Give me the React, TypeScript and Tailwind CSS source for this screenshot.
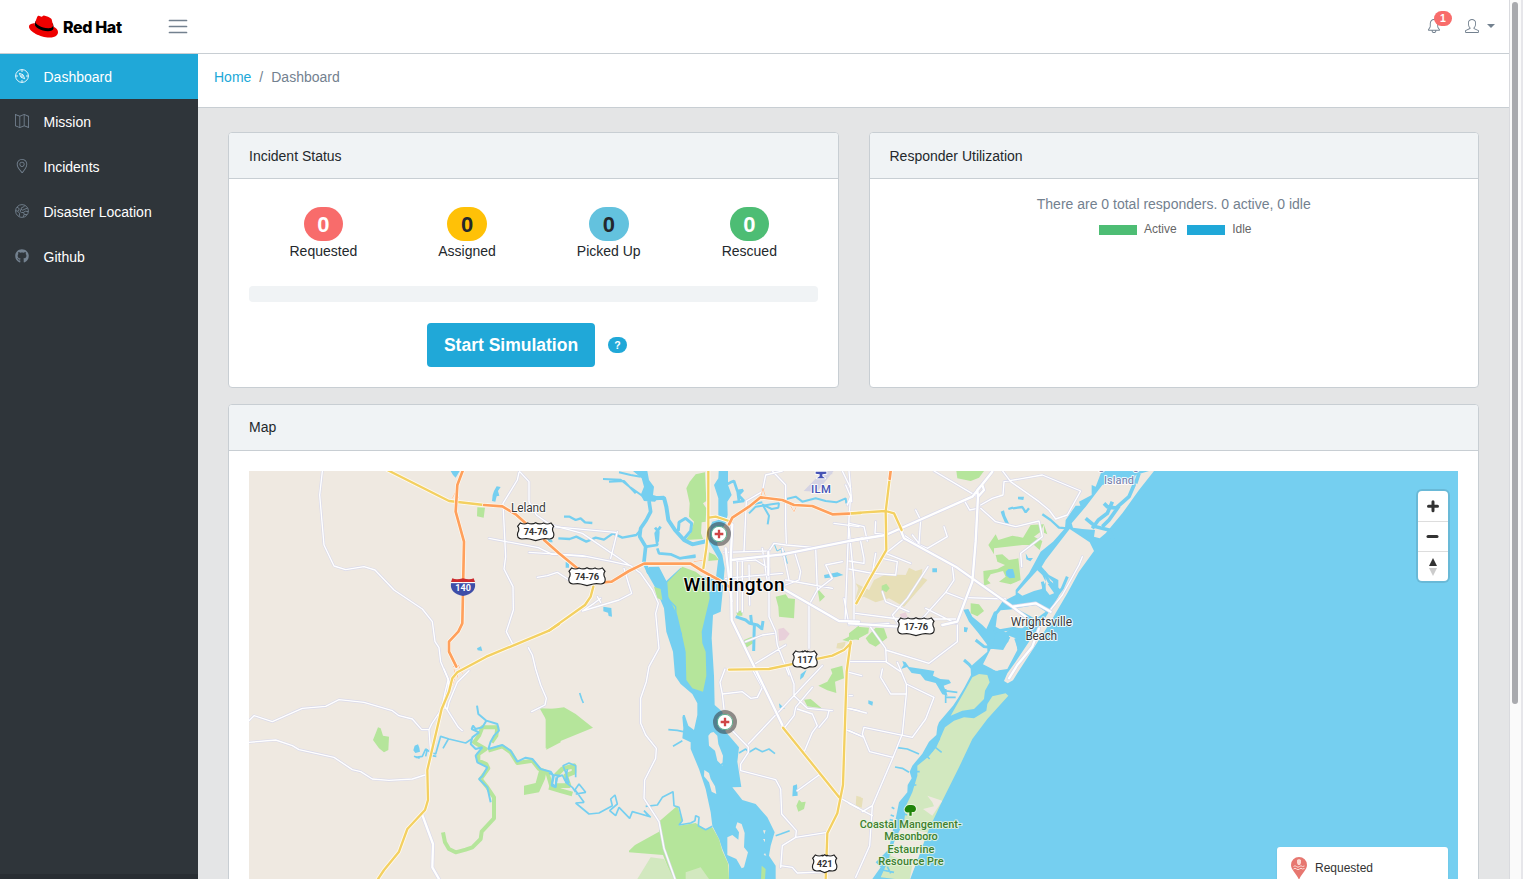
import React from "react";
import { SlMap, SlLocationPin, SlBell, SlUser } from "react-icons/sl";
import { FaGithub } from "react-icons/fa";

type Shape = [number, number, string];

const LAND = "#efe9e1";
const WATER = "#75cff0";
const GREEN = "#b5e59b";
const RESERVE = "#d2e8bf";

// Map geometry is grouped by tile: [tile x, tile y, path].
const seas: Shape[] = [
  [1800, 0, "M765 0L740 65 728 60 728 90 690 110 694 122 680 122 650 165 648 190 612 230 575 260 540 325 500 375 500 390 460 410 440 440 438 480 415 500 415 560 370 600 365 612 366 630 345 670 327 700 312 722 270 772 265 785 262 810 240 830 220 866 190 902 182 920 188 940 176 960 175 982 150 1012 140 1062 130 1102 120 1152 100 1172 80 1192 95 1207 70 1242 1900 1250 1900 0Z"],
  [900, 0, "M510 0H537V60L548 90 535 110 536 150 530 175 505 210 505 240 520 270 527 310 520 390 515 440 492 450 488 520 495 632 497 720 520 740 530 800 570 847 565 890 577 966 550 967 580 1005 620 1017 655 1057 677 1102 665 1142 660 1172 680 1202 680 1250H540L540 1200 520 1152 510 1122 490 1082 485 1042 470 972 450 912 425 852 425 832 400 820 403 790 400 755 407 750 418 782 435 795 445 750 445 715 430 687 395 657 378 632 372 560 352 500 345 430 320 370 292 320 300 306 330 305 352 348 395 308 400 320 500 345 508 280 482 235 470 215 490 170 508 165 508 100 495 60 508 40Z"],
  [900, 0, "M252 18L295 18 300 45 315 65 312 90 330 95 318 110 285 108 275 90 285 65 278 40Z"],
  [1800, 0, "M343 434L358 432 370 455 400 480 412 492 435 440 465 430 440 500 430 560 400 520 385 500 360 470Z"],
  [0, 0, "M605 18h27l-12 20-8-8z M735 78l8-14 12 2-8 12 4 14-8 2-4 16-10-2 2-18z M684 550l12-6 4 14-14-2z M497 842l10-4 4 10 2 12-14 4-6-8z M895 222l14 2 2 8-12 0z"],
  [900, 0, "M163 425l24 4 2 26-10-2-2-10-14-4z M825 330l40-8 18 8-22 6-34 4z M697 245l10 14 10 38-10-6-10-26z M732 962l12-4 2 34-16 2z M355 1102l12 0 4 12-10 28-8-2z M690 715l18 16-16-2z M50 290l10 4 0 14-10 0z M755 628l18-14-10 22-10 8z M485 1215l25-24 6 8-10 30-20 20-8-10z"],
  [1800, 0, "M455 140l10-4 4 16 12 26-10 2-12-28z M507 95l18 0-2 10-16-2z M530 265l8 14 14 0-8 10-12-6z M250 310h14v12h-14z M345 486l12 2-4 14-8-2z M58 706l14 4-2 12-12-6z M160 588l10 4 10 14 40 6 36 6-4 14 22 10 26 2 6 10-22 8 12 30-16-4-20-34-32-8-14-18-26-4-14-18-18 6 8-12z"],
];

const creeks: [number, number, string, number][] = [
  [900, 0, "M318 100L345 98 352 125 358 165 378 195 405 225 430 238 475 228", 12],
  [900, 0, "M388 198L390 172 410 160 428 175 425 198 405 222", 9],
  [900, 0, "M300 108L305 140 292 165 275 190 272 215 290 245 285 290 300 325", 11],
  [900, 0, "M210 22L245 30 275 35M162 42L215 44 245 68 285 96M180 50L225 48 260 85", 6],
  [900, 0, "M45 155L62 155 80 165 95 160 108 172 130 174M28 220L62 222 82 215 112 230 140 218 165 224 192 205 220 218 262 210 275 195", 7],
  [900, 0, "M292 245L325 240 320 205 335 185M325 250L330 265 365 268 392 280 440 272M318 188L328 200 326 230M408 278L440 275", 8],
  [900, 0, "M360 405L380 425 382 470 398 510", 4],
  [900, 0, "M530 60L545 52 555 48 565 78 582 75 568 90 585 108 552 112M566 80L570 110", 8],
  [900, 0, "M600 145L620 125 640 122 668 118 690 115 688 128 668 132 640 118 660 152 656 178M712 102L740 95 760 110 800 100 830 108 862 112 890 100 892 115M600 128L612 118 640 112", 6],
  [900, 0, "M560 455L590 465 602 475 625 480 640 492M605 450L608 478M616 482L615 515 614 558M638 495L642 468", 9],
  [900, 0, "M677 240L684 258 700 250 712 272", 3],
  [0, 612, "M684 110L688 135 712 155 745 165 750 185 735 200 725 218 718 240 760 228 785 245 805 278 830 266 850 270 875 300 905 308 912 318 935 320", 6],
  [0, 612, "M712 155L700 175 680 180 672 170 668 180 690 190 670 205 665 225 680 240 700 235 680 260 685 280 715 295 700 322 690 330 715 355 725 400", 6],
  [0, 612, "M668 210L650 222 600 210 575 202 560 255 545 250 530 240 520 262 500 265M598 210L582 238M548 260L562 262M495 262L512 268M530 262L535 240", 5],
  [0, 612, "M912 318L908 350 920 355 922 325", 6],
  [900, 612, "M0 312L15 320 10 345 20 352 25 325 40 318 48 335 60 342 50 310 42 290 60 282 80 290 80 325M55 300L50 340 70 355 80 370M80 375L110 370 90 345 78 362 105 400 80 402 120 435 150 432 190 410 185 390 198 378 205 405 182 425 200 440 210 415 242 448 250 428 275 435 300 442 285 425 305 445M290 412L325 408 340 385 372 368 375 410 390 415 400 455 390 468 425 462 438 455 440 440 450 445 448 470 470 482 490 472", 5],
  [900, 612, "M358 182L385 184 402 188M372 232L400 215M404 138L406 170M92 72L98 90 103 102M570 252L590 240 600 250 620 238 640 248 660 240 678 254M680 500L695 495 722 485M478 190L500 185M510 290L525 282M540 430L548 438", 5],
  [1800, 0, "M492 130L520 126 530 142 540 130M478 132L492 128M580 148L605 165 630 188 655 190", 7],
  [1800, 612, "M285 65L325 70M288 85L320 85M290 60L290 102M145 236L175 240 210 255M138 294L160 298 180 310M128 415l8 4M125 438l10 4M122 452l10 2", 5],
];

const islands: Shape[] = [
  [1800, 0, "M795 48L850 55 860 30 900 18 915 18 870 75 820 145 770 205 752 220 735 215 738 195 700 192 672 188 668 175 710 125 760 60Z"],
  [1800, 0, "M662 192L722 232 735 258 690 320 655 385 605 470 560 540 505 625 492 646 476 655 465 648 475 625 500 590 560 500 575 480 600 440 628 395 628 345 600 330 578 305 590 285Z"],
  [1800, 0, "M565 316L580 330 590 350 578 372 555 378 520 392 505 382Z M590 330L612 350 615 385 602 390 590 375Z"],
  [1800, 0, "M445 448L455 436 500 432 520 455 545 470 520 490 490 488 470 502 440 485Z M480 512L500 520 505 555 475 612 440 617 402 598 425 552 455 548 478 530Z"],
  [1800, 0, "M500 430L560 420 590 440 560 462 520 440Z"],
  [900, 612, "M490 185L478 200 480 230 498 245 505 275 520 290 522 260 508 225 505 200Z M466 303L465 322 480 340 488 368 502 375 498 352 485 330 480 312Z M565 460L578 465 587 492 585 535 597 550 585 595 578 598 562 570 535 558 535 505 550 498 568 512 570 490 560 475Z M642 484h8l-4 12z M642 510h6v10z M648 552l4 8-8-2z"],
  [1800, 612, "M430 0h25l-10 5z"],
];

const woods: Shape[] = [
  [0, 0, "M685 127L708 128 704 158 684 154Z M387 787L395 790 402 812 420 815 418 855 405 862 390 850 372 825 380 805Z"],
  [0, 612, "M872 118L930 120 935 220 892 242 893 155Z M825 350L860 342 870 305 892 310 888 330 870 370 825 378Z"],
  [900, 612, "M-10 122L45 115 80 135 132 176 20 222 -10 238Z M240 545L258 528 330 488 332 456 385 410 400 455 390 470 440 462 470 482 490 475 510 510 520 545 538 585 540 630 480 645 370 630 342 558 240 550Z M765 92L785 90 818 118 775 112Z M750 392L758 400 770 398 765 420 748 428 742 410Z M638 590L650 600 648 630 636 630Z"],
  [900, 0, "M440 28L468 22 472 108 462 115 472 130 470 170 458 172 456 205 462 222 410 225 425 205 435 170 420 155 422 115 412 70 422 50Z"],
  [900, 0, "M480 262L498 270 510 285 478 288Z M315 365L335 372 340 405 325 400Z"],
  [900, 0, "M355 352L400 305 440 320 478 350 482 400 470 450 458 500 460 535 470 560 472 632 462 680 430 670 412 645 410 560 398 505 385 450 358 395Z"],
  [900, 0, "M680 395L710 388 718 400 738 402 735 460 690 455 688 425Z M805 370L828 395 812 410Z M585 525L608 515 612 535 592 548Z M562 440L580 436 580 452 565 452Z M845 612L880 602 885 640 858 650 862 684 835 676 808 662 835 650 850 625Z M895 520L930 480 930 525Z"],
  [1800, 0, "M322 18H405L390 38 365 48 325 40Z"],
  [1800, 0, "M440 270L460 268 480 285 508 280 515 345 485 358 450 350 470 335 462 318 425 328 415 345 425 355 405 362 403 318 445 312 468 300 445 290Z"],
  [1800, 0, "M440 208L448 225 490 212 522 218 545 180 585 178 575 200 555 215 580 228 572 255 555 240 520 240 435 250 435 268 418 240Z M585 180l10 28-10-5z"],
  [1800, 0, "M365 415L390 418 405 438 385 454 365 445Z M0 505L25 485 60 488 58 505 30 520 0 528Z M50 520L80 488 105 490 115 518 80 545 60 535Z M-20 525L0 515 0 530Z"],
];

const reserves: Shape[] = [
  [1800, 612, "M305 140L345 70 370 25 390 15 415 18 422 40 408 65 405 90 375 120 340 125Z"],
  [1800, 612, "M478 80L470 73 430 82 415 105 412 125 375 148 345 145 315 155 288 175 262 235 240 262 205 290 205 320 190 370 172 408 165 460 150 500 125 540 120 570 95 625 180 635 210 560 240 480 280 395 330 295 370 210 415 150Z"],
  [900, 612, "M305 565L345 570 375 630 265 630Z M410 610L455 595 480 630 410 630Z"],
];

const sands: Shape[] = [
  [1800, 612, "M235 380L280 395 250 440 222 420 255 412 250 400Z M155 478L235 490 210 560 180 640 190 590 165 575 125 560 135 520Z"],
];

const fields: Shape[] = [
  [1800, 0, "M75 345L110 328 170 330 180 308 200 318 220 312 218 335 235 345 165 425 120 400 80 412 45 395 18 405 28 370 20 355 60 375Z M22 992l20 8-4 28-18-4z"],
  [900, 0, "M865 535L890 530 885 552 862 550Z M925 995h10v22h-10z"],
];

const greenWays: [string, number, string][] = [
  ["translate(0 612)", 12, "M582 490L588 520 600 540 620 550 650 542 670 535 695 510 698 488 735 448 735 385 715 355 695 330 718 298 712 285 688 275 688 255 710 240 675 220 690 200 700 175 745 175 742 200 728 220M718 245L760 232 785 250 805 282 850 275 870 300 895 310 908 355 935 365"],
  ["translate(900 612)", 14, "M0 355L35 365 70 375M20 320L40 300 75 290 75 310 50 320 60 350 20 350"],
];

const minor: Shape[] = [
  [0, 0, "M221 10L212 90 225 240 255 303 290 314 345 305 378 315 435 375 520 432 550 470 558 530 570 548 575 590 600 650 588 730 M810 22L805 45 762 115 770 275 765 312 792 365 793 435 772 500 790 535 M812 20L840 50 840 110 862 150 912 185 1100 202 M720 220L868 248 910 268 930 268 1010 275 M865 337L895 332 925 322 960 345 M838 548L850 570 860 612 875 660 892 700 888 720 848 740"],
  [0, 612, "M0 155L15 140 70 158 160 118 230 112 270 92 345 100 430 125 450 140 490 150 518 182 540 182 548 165 578 120 588 70 598 30 585 0 M540 182L545 250 M590 115L628 175 640 185 M0 220L80 213 130 230 150 242 255 265 310 302 335 308 370 330 420 334 490 330 528 318 M660 5L625 40 600 100 595 120"],
  [900, 0, "M0 178L100 205 240 300 M-60 262L100 272 190 290 245 302 275 325 310 375 328 415 320 445 330 550 300 605 292 650 275 700 275 775 290 810 322 850 320 880 287 945 285 1000 330 1070 345 1150 378 1242 M205 200L185 280 M225 310L240 360 248 385 210 405 100 438 135 415 155 400 M145 395L155 412"],
  [900, 0, "M700 18L650 30 640 80 592 108 585 260 M670 18L710 60 710 180 712 235 M890 60L905 95 895 120 M880 18L905 70 M905 90L900 160 888 470 M855 175L930 185 M525 262L660 258 675 235 710 240 800 248 M562 288L620 285 660 310 660 455 680 500 685 540 720 630 M530 340L700 325 M800 250L805 375 780 420 780 550 M738 265L755 320 750 345 710 360 M580 290L580 440 M600 300L602 420 M565 290L565 440 M640 250L655 350 M700 250L720 345 M710 345L850 370 M805 375L850 340 830 300 880 290 M885 400L900 480 M590 530L640 510 675 505 M620 595L710 540"],
  [900, 612, "M528 0L513 40 520 75 525 120 M520 75L580 68 605 88 625 85 640 55 M640 55L610 0 M550 185L598 235 598 250 575 285 575 305 680 332 695 360 698 435 742 485 740 505 M598 225L820 -10 M695 595L700 530 740 505 835 490 M695 590L730 595 745 612 840 608 M705 178L735 140 740 115 790 55 M745 120L790 135 805 170 790 190 765 250 M840 125L835 145 810 175 M850 125L775 118 735 80 735 45 715 -10 M870 385L930 418 M890 182L930 198 M895 118L930 125 M745 365L810 318"],
  [1800, 0, "M0 175L45 185 55 228 M80 170L78 205 108 208 M0 190L15 345 15 470 M0 288L45 295 45 280 35 230 M110 265L185 295 M80 265L70 325 0 312 M70 325L140 330 145 290 100 280 M110 265L160 225 M200 135L215 165 210 235 190 210 M165 210L200 235 235 250 295 215 285 185 M0 18L8 110"],
  [1800, 0, "M255 18L385 95 M465 50L580 30 695 78 655 150 620 162 600 135 570 110 485 50 455 10 M465 50L462 90 430 100 395 120 M395 130L440 170 500 185 570 168 580 215 515 265 518 305 M345 105L362 135 385 130 M310 305L315 345 290 382 220 460 M290 382L350 405 M237 305L175 400 130 450 150 480 M355 398L470 402 M20 480L120 475 M20 445L150 462 320 462 M60 480L110 550 112 590 M110 555L240 595 325 530 325 480 M230 430L320 475 M100 380L110 410 180 440 M0 590L110 590 155 620"],
  [1800, 612, "M100 0L95 25 125 75 172 75 172 45 145 -20 M172 45L255 85 230 150 190 205 45 175 40 195 62 248 132 265 M172 75L160 195 M45 205L0 185 M160 195L132 265 70 410 62 530 20 625 M0 403L70 440 M70 410L40 428 M0 80H10 M0 118L52 132 M0 10L38 20"],
  [1800, 0, "M700 275L690 300 640 390 600 440"],
];

const major: Shape[] = [
  [900, 0, "M550 178L545 285 548 465 700 780 M530 250L548 410 M548 285L700 268 940 220 M658 260L658 330 M700 370L870 468 930 470"],
  [1800, 0, "M0 228L110 210 370 95 430 20 M400 60L405 75 387 95 380 230 370 350 325 470 280 480 M387 95L385 75 400 58 M155 195L165 220 320 305 490 425 530 455 M490 425L560 415 605 440 M0 475L150 485 M570 490L550 545 505 600 480 640"],
  [0, 612, "M520 438L552 525 550 595 570 630"],
];

const yellow: Shape[] = [
  [0, 0, "M415 15L600 108 705 120 M930 477L900 497 712 575 625 622 610 640 600 680 578 732 535 915 537 1005 528 1035 475 1092 450 1160 405 1215 385 1245"],
  [900, 0, "M478 15L478 190 472 250 463 310 M480 158L500 155 540 168 M133 365L125 395 108 420 0 497 M900 146L935 144 M540 614L660 612 740 595 850 572 885 555 905 535"],
  [900, 0, "M905 530L893 620 882 960 865 1045 835 1105 830 1245 M702 788L870 996"],
  [1800, 0, "M0 145L110 138 135 145 158 195 M122 40L110 140 112 255 60 345 22 415"],
];

const orange: Shape[] = [
  [0, 0, "M642 15L625 60 620 140 645 230 640 475 628 500 600 530 600 560 622 605 M705 120L760 124 800 148 830 175 M885 225L930 265 985 310"],
  [900, 0, "M160 352L188 350 240 318 285 296 425 296 460 318 510 345 540 365 M540 178L550 158 600 125 635 97 700 105 735 120 790 123 850 148 900 146"],
  [1800, 0, "M126 10L122 42"],
];

const ramps: Shape[] = [
  [0, 0, "M610 100L620 80 630 100 M612 605L628 600 640 625"],
  [0, 612, "M615 0L620 20 610 50 M628 0L625 25"],
  [900, 0, "M635 97L642 70 650 97 665 98 M435 290L465 285 460 310 M720 115L735 140 745 118"],
];

function Layer({ shapes, fill }: { shapes: Shape[]; fill: string }) {
  return (
    <g fill={fill}>
      {shapes.map(([x, y, d], i) => (
        <path key={i} transform={`translate(${x} ${y})`} d={d} />
      ))}
    </g>
  );
}

function Roads({ shapes, casing, color, outer, inner }: { shapes: Shape[]; casing: string; color: string; outer: number; inner: number }) {
  const draw = (stroke: string, width: number) => (
    <g fill="none" stroke={stroke} strokeWidth={width} strokeLinejoin="round" strokeLinecap="round">
      {shapes.map(([x, y, d], i) => (
        <path key={i} transform={`translate(${x} ${y})`} d={d} />
      ))}
    </g>
  );
  return (
    <>
      {draw(casing, outer)}
      {draw(color, inner)}
    </>
  );
}

function UsShield({ x, y, label, w, text }: { x: number; y: number; label: string; w: number; text: number }) {
  const h = w / 2;
  return (
    <g transform={`translate(${x} ${y})`}>
      <path
        d={`M${-h + 10} -26Q${-h + 22} -20 ${-h + 32} -26Q-10 -20 0 -27Q10 -20 ${h - 32} -26Q${h - 22} -20 ${h - 10} -26L${h - 2} -16Q${h - 9} -8 ${h - 2} 4Q${h + 2} 20 ${h - 14} 22Q${h - 30} 20 ${h / 3} 22L0 27L${-h / 3} 22Q${-h + 30} 20 ${-h + 14} 22Q${-h - 2} 20 ${-h + 2} 4Q${-h + 9} -8 ${-h + 2} -16Z`}
        fill="#fff"
        stroke="#222"
        strokeWidth="3.5"
      />
      <text y="10" textAnchor="middle" fontSize="28" fontWeight="700" fill="#333" textLength={text}>
        {label}
      </text>
    </g>
  );
}

function Hospital({ x, y }: { x: number; y: number }) {
  return (
    <g transform={`translate(${x} ${y})`}>
      <circle r="30" fill="none" stroke="#333" strokeOpacity=".52" strokeWidth="12" />
      <circle r="23" fill="#fff" stroke="#3b9b74" strokeWidth="2.5" />
      <path d="M-13 0H13M0 -13V13" stroke="#cf4647" strokeWidth="7" />
    </g>
  );
}

function RegionMap() {
  return (
    <svg className="block h-full w-full" viewBox="0 18 3627 1224" preserveAspectRatio="none" fontFamily='Roboto, "Liberation Sans", sans-serif'>
      <rect width="3627" height="1250" fill={LAND} />
      <Layer shapes={fields} fill="#e7dfb8" />
      <path d="M1588 492l16-4 18 18-14 18-18 4zM1952 448l18-6 6 14-16 8z" fill="#e8d0da" />
      <path d="M1664 78l50-52 40-8-50 62zM1714 18h36v10h-30z" fill="#d5d3e3" />
      <Layer shapes={seas} fill={WATER} />
      <Layer shapes={islands} fill={LAND} />
      <Layer shapes={woods} fill={GREEN} />
      <Layer shapes={reserves} fill={RESERVE} />
      <Layer shapes={sands} fill={LAND} />
      {greenWays.map(([t, w, d], i) => (
        <path key={i} transform={t} d={d} fill="none" stroke={GREEN} strokeWidth={w} strokeLinejoin="round" />
      ))}
      <g fill="none" stroke={WATER}>
        {creeks.map(([x, y, d, w], i) => (
          <path key={i} transform={`translate(${x} ${y})`} d={d} strokeWidth={w} strokeLinejoin="bevel" />
        ))}
        <path d="M2510 160L2540 185 2580 195 2595 230M2530 190L2548 165 2575 145 2590 110M2565 115L2575 125 2605 130 2580 165 2560 185M2600 130L2640 95 2655 60 2650 40M2670 25L2660 55" strokeWidth="11" />
        <path d="M2370 545L2400 530 2415 560M2235 500L2295 490 2330 500 2348 505M2180 525L2205 545 2260 550 2280 515M2300 520L2312 555M2385 320L2400 350 2435 380M2400 355L2425 390 2440 370 2455 335M2380 350L2390 395 2410 410M2145 585L2160 598 2178 620" strokeWidth="9" />
        <path d="M2048 860L2072 820M2060 848L2078 862M1960 1045L1974 1050M1900 1215L1935 1222M1915 1205L1925 1225M2030 870L2042 882M1995 920H2012M1985 960H2002" strokeWidth="5" />
      </g>
      <path transform="translate(1800 0)" d="M470 320l8-8 14 0 4 14 2 12-16 2-10-8z" fill={WATER} />
      <path d="M1898 362l14-6 10 14-10 12-14-8z" fill={GREEN} />
      <Roads shapes={minor} casing="#dadaeb" color="#ffffff" outer={8} inner={4} />
      <Roads shapes={major} casing="#dadaeb" color="#ffffff" outer={11} inner={7} />
      <Roads shapes={ramps} casing="#fff" color="#ffa869" outer={4} inner={2} />
      <Roads shapes={yellow} casing="#fffaf0" color="#f3d061" outer={12} inner={7} />
      <Roads shapes={orange} casing="#fffaf0" color="#ffa05c" outer={12} inner={8} />

      <UsShield x={860} y={200} label="74-76" w={112} text={72} />
      <UsShield x={1014} y={335} label="74-76" w={112} text={72} />
      <UsShield x={2001} y={485} label="17-76" w={112} text={72} />
      <UsShield x={1668} y={584} label="117" w={76} text={47} />
      <UsShield x={1727} y={1196} label="421" w={76} text={47} />

      <g transform="translate(642 366)">
        <path d="M-32 -26Q-20 -20 0 -26Q20 -20 32 -26L36 -15H-36Z" fill="#cb2b2e" />
        <path d="M-36 -12H36Q40 20 0 27Q-40 20 -36 -12Z" fill="#3e4ea8" />
        <path d="M-36 -13H36" stroke="#fff" strokeWidth="3" />
        <text y="12" textAnchor="middle" fontSize="27" fontWeight="700" fill="#fff" textLength="47">140</text>
      </g>

      <Hospital x={1410} y={207} />
      <Hospital x={1428} y={771} />

      <g stroke="#fff" strokeOpacity=".85" strokeWidth="6" strokeLinejoin="round" paintOrder="stroke" textAnchor="middle">
        <text x="1455" y="378" fontSize="57" fontWeight="500" fill="#000" textLength="303">Wilmington</text>
        <text x="838" y="142" fontSize="36" fill="#3b3b3b" textLength="104">Leland</text>
        <text x="2377" y="482" fontSize="36" fill="#3b3b3b" textLength="184">Wrightsville</text>
        <text x="2377" y="525" fontSize="36" fill="#3b3b3b" textLength="95">Beach</text>
        <text x="2610" y="58" fontSize="33" fill="#7178a8" textLength="90">Island</text>
        <text x="2610" y="16" fontSize="33" fill="#7178a8" textLength="180">Figure Eight</text>
        <text x="1716" y="83" fontSize="34" fontWeight="500" fill="#4653b5" textLength="60">ILM</text>
        <path d="M1700 20H1732V26L1720 28V34L1728 40H1704L1712 34V28L1700 26Z" fill="#4653b5" />
        <g fontSize="33" fontWeight="500" fill="#3d8030" stroke="#eaf5df">
          <text x="1985" y="1089" textLength="306">Coastal Mangement-</text>
          <text x="1986" y="1126" textLength="161">Masonboro</text>
          <text x="1986" y="1163" textLength="141">Estaurine</text>
          <text x="1986" y="1200" textLength="196">Resource Pre</text>
          <path d="M1981 1052V1042Q1966 1044 1967 1032Q1972 1018 1984 1020Q2000 1018 2001 1032Q2000 1043 1988 1041V1052Z" fill="#1f8409" />
        </g>
      </g>
    </svg>
  );
}

function RedHatLogo() {
  return (
    <div className="flex w-[94px] items-center">
      <svg className="h-[29px] w-[29px] shrink-0" viewBox="0 0 24 24">
        <path d="M5.3 7.6L4.6 9.9C4 14 10 17 16 17C20 17 21.5 15 20.6 13L19.8 9.6Z" fill="#000" />
        <path
          fill="#e00"
          d="M16.009 13.386c1.577 0 3.86-.326 3.86-2.202a1.765 1.765 0 0 0-.04-.431l-.94-4.08c-.216-.898-.406-1.305-1.982-2.093-1.223-.625-3.888-1.658-4.676-1.658-.733 0-.947.946-1.822.946-.842 0-1.467-.706-2.255-.706-.757 0-1.25.515-1.63 1.576 0 0-1.06 2.99-1.197 3.424a.81.81 0 0 0-.028.245c0 1.162 4.577 4.974 10.71 4.974m4.101-1.435c.218 1.032.218 1.14.218 1.277 0 1.765-1.984 2.745-4.593 2.745-5.895.004-11.06-3.451-11.06-5.734a2.326 2.326 0 0 1 .19-.925C2.746 9.415 0 9.794 0 12.217c0 3.969 9.405 8.861 16.851 8.861 5.71 0 7.149-2.582 7.149-4.62 0-1.605-1.387-3.425-3.887-4.512"
        />
      </svg>
      <div className="ml-[5px] flex gap-[3px] font-[Inter,sans-serif] text-[16px] leading-5 font-extrabold tracking-[-0.35px] text-black">
        <span>Red</span>
        <span>Hat</span>
      </div>
    </div>
  );
}

function Header() {
  return (
    <header className="flex h-[54px] shrink-0 items-center border-b border-[#c8ced3] bg-white text-[#73818f]">
      <div className="pl-[29px]">
        <RedHatLogo />
      </div>
      <svg className="ml-[45px] h-[17px] w-5" viewBox="0 0 20 17" stroke="#73818f" strokeWidth="1.7" strokeLinecap="round">
        <path d="M1.5 2.5H18.5M1.5 8.5H18.5M1.5 14.5H18.5" />
      </svg>
      <div className="relative mr-6 mb-[2px] ml-auto">
        <SlBell className="h-[14px] w-[14px]" />
        <span className="absolute -top-[8px] left-[7px] flex h-[15px] w-[18px] items-center justify-center rounded-full bg-[#f86c6b] text-[10.5px] leading-none font-bold text-white">
          1
        </span>
      </div>
      <div className="mr-[14px] mb-[2px] flex items-center gap-[8px]">
        <SlUser className="h-[14px] w-[14px]" />
        <span className="border-x-[4px] border-t-[4px] border-x-transparent border-t-[#73818f]" />
      </div>
    </header>
  );
}

function CompassIcon({ className }: { className: string }) {
  return (
    <svg className={className} viewBox="0 0 14 14" fill="none" stroke="currentColor" strokeWidth=".9">
      <circle cx="7" cy="7" r="6.4" />
      <path d="M7 .6V3M7 11V13.4M.6 7H3M11 7H13.4" />
      <path d="M4.3 4.3L8 5.7L9.7 9.7L6 8.2Z" />
      <circle cx="7" cy="7" r=".5" />
    </svg>
  );
}

function GlobeIcon({ className }: { className: string }) {
  return (
    <svg className={className} viewBox="0 0 14 14" fill="none" stroke="currentColor" strokeWidth=".9" strokeLinejoin="round">
      <circle cx="7" cy="7" r="6.4" />
      <path d="M2 3.2L4.2 4.6L3.8 6.4L2.4 7.2L.8 6.6M2.4 7.2L4.6 9.2L4.2 12.6M9.8 1.4L8.6 3L6.6 3.6L6 5.4L7.8 6.2L10 5L12.6 4.2M6 5.4L5 7.4L6.6 8.6L8.6 8.4L9.2 10.4L8.2 13M8.6 8.4L10.2 7.2L13.2 7.6M9.2 10.4L12 10.6" />
    </svg>
  );
}

const links = [
  { label: "Dashboard", Icon: CompassIcon },
  { label: "Mission", Icon: SlMap },
  { label: "Incidents", Icon: SlLocationPin },
  { label: "Disaster Location", Icon: GlobeIcon },
  { label: "Github", Icon: FaGithub },
];

function Sidebar() {
  return (
    <aside className="flex w-[198px] shrink-0 flex-col bg-[#2f353a]">
      <nav>
        {links.map(({ label, Icon }, i) => (
          <a
            key={label}
            className={
              i === 0
                ? "flex h-[45px] items-center bg-[#20a8d8] pl-[15px] text-white"
                : "flex h-[45px] items-center pl-[15px] text-white"
            }
          >
            <Icon className={i === 0 ? "mb-px h-[14px] w-[14px] text-white" : "mb-px h-[14px] w-[14px] text-[#73818f]"} />
            <span className="ml-[14.5px] pt-[2px]">{label}</span>
          </a>
        ))}
      </nav>
      <div className="mt-auto h-[5px] bg-[#292e33]" />
    </aside>
  );
}

function Card({ title, className, titleClass = "", children }: { title: string; className: string; titleClass?: string; children: React.ReactNode }) {
  return (
    <section className={`flex flex-col overflow-hidden rounded-[4px] border border-[#c8ced3] bg-white ${className}`}>
      <h2 className={`flex h-[46px] shrink-0 items-center border-b border-[#c8ced3] bg-[#f0f3f5] px-5 ${titleClass}`}>{title}</h2>
      {children}
    </section>
  );
}

const statuses = [
  { label: "Requested", badge: "bg-[#f86c6b] text-white" },
  { label: "Assigned", badge: "bg-[#ffc107] text-[#23282c]" },
  { label: "Picked Up", badge: "bg-[#63c2de] text-[#23282c]" },
  { label: "Rescued", badge: "bg-[#4dbd74] text-white" },
];

function IncidentStatus() {
  return (
    <Card title="Incident Status" className="flex-1" titleClass="pt-[2px]">
      <div className="px-5 pt-7">
        <div className="flex justify-around">
          {statuses.map(({ label, badge }) => (
            <div key={label} className="flex flex-col items-center">
              <span className={`flex h-[34px] w-[39.5px] items-center justify-center rounded-full pt-px text-[22px] leading-none font-bold ${badge}`}>0</span>
              <span className="leading-[21px]">{label}</span>
            </div>
          ))}
        </div>
        <div className="mt-6 h-4 rounded bg-[#f0f3f5]" />
        <div className="mt-[21px] flex items-center pl-[178px]">
          <button className="h-11 w-[168px] rounded bg-[#20a8d8] text-[17.5px] font-bold text-white">Start Simulation</button>
          <span className="ml-[13px] flex h-4 w-[19px] items-center justify-center rounded-full bg-[#20a8d8] text-[10.5px] leading-none font-bold text-white">?</span>
        </div>
      </div>
    </Card>
  );
}

function ResponderUtilization() {
  return (
    <Card title="Responder Utilization" className="flex-1" titleClass="pt-[2px]">
      <div className="flex flex-col items-center pt-[15px]">
        <p className="leading-[21px] text-[#73818f]">There are 0 total responders. 0 active, 0 idle</p>
        <div className="mt-[6px] ml-[3px] flex items-center gap-[10.5px] text-[12px] leading-4 text-[#666]">
          <span className="flex items-center gap-[7px]">
            <span className="mt-[2px] h-[10px] w-[38px] bg-[#4dbd74]" />
            Active
          </span>
          <span className="flex items-center gap-[7px]">
            <span className="mt-[2px] h-[10px] w-[38px] bg-[#20a8d8]" />
            Idle
          </span>
        </div>
      </div>
    </Card>
  );
}

function MapControls() {
  return (
    <div className="absolute top-5 right-[10px] flex h-[90px] w-[30px] flex-col rounded-[4px] bg-white shadow-[0_0_0_2px_rgba(0,0,0,0.1)]">
      <svg className="h-[30px] w-[30px]" viewBox="0 0 30 30" stroke="#333" strokeWidth="3" strokeLinecap="round">
        <path d="M10.5 15.3H19.5M15 10.8V19.8" />
      </svg>
      <div className="h-[30px] border-t border-[#ddd]">
        <svg className="h-[29px] w-[30px]" viewBox="0 0 30 29" stroke="#333" strokeWidth="3" strokeLinecap="round">
          <path d="M10 14.5H19" />
        </svg>
      </div>
      <div className="h-[30px] border-t border-[#ddd]">
        <svg className="h-[29px] w-[30px]" viewBox="0 0 30 29">
          <path d="M11 14L15 6L19 14Z" fill="#333" />
          <path d="M11 16L15 24L19 16Z" fill="#ccc" />
        </svg>
      </div>
    </div>
  );
}

function MapLegend() {
  return (
    <div className="absolute top-[376px] right-[10px] flex h-[80px] w-[171px] items-start rounded-[3px] bg-white pt-[10px] pl-[14px] text-[12px] leading-[22px] text-[#333] shadow-[0_1px_2px_rgba(0,0,0,0.1)]">
      <svg className="h-[23px] w-4" viewBox="0 0 16 23">
        <path d="M8 23C6 17 0 13 0 8A8 8 0 0 1 16 8C16 13 10 17 8 23Z" fill="#e77770" />
        <path d="M6 3V6L7 8H9L10 6V3L8 2Z" fill="#fbd9d3" />
        <path d="M2.5 9.5Q4 8 5.5 9.5T8.5 9.5T11.5 9.5L13.5 9M2.5 12Q4 10.5 5.5 12T8.5 12T11.5 12L13.5 11.5" fill="none" stroke="#fbd9d3" strokeWidth="1" />
      </svg>
      <span className="ml-2">Requested</span>
    </div>
  );
}

export default function App() {
  return (
    <div className="flex h-[879px] w-full overflow-hidden bg-white font-['Liberation_Sans',Arial,sans-serif] text-[14px] leading-[21px] text-[#23282c]">
      <div className="flex min-w-0 flex-1 flex-col">
        <Header />
        <div className="flex min-h-0 flex-1">
          <Sidebar />
          <main className="flex min-w-0 flex-1 flex-col overflow-hidden bg-[#e4e5e6]">
            <div className="flex h-[54px] shrink-0 items-center gap-2 border-b border-[#c8ced3] bg-white px-4 pb-[7px] text-[#73818f]">
              <a className="text-[#20a8d8]">Home</a>
              <span>/</span>
              <span>Dashboard</span>
            </div>
            <div className="flex flex-col px-[30px] pt-6">
              <div className="flex h-64 gap-[30px]">
                <IncidentStatus />
                <ResponderUtilization />
              </div>
              <Card title="Map" className="mt-4 h-[600px]">
                <div className="p-5">
                  <div className="relative h-[408px]">
                    <RegionMap />
                    <MapControls />
                    <MapLegend />
                  </div>
                </div>
              </Card>
            </div>
          </main>
        </div>
      </div>
      <div className="flex w-[14px] shrink-0 justify-between border-l border-[#d9dade] bg-[#fafafa] pt-[2px]">
        <div className="ml-[2px] h-[702px] w-[6px] rounded-full bg-[#a9aaae]" />
        <div className="-mt-[2px] w-[2px] bg-[#e6e6ea]" />
      </div>
    </div>
  );
}
